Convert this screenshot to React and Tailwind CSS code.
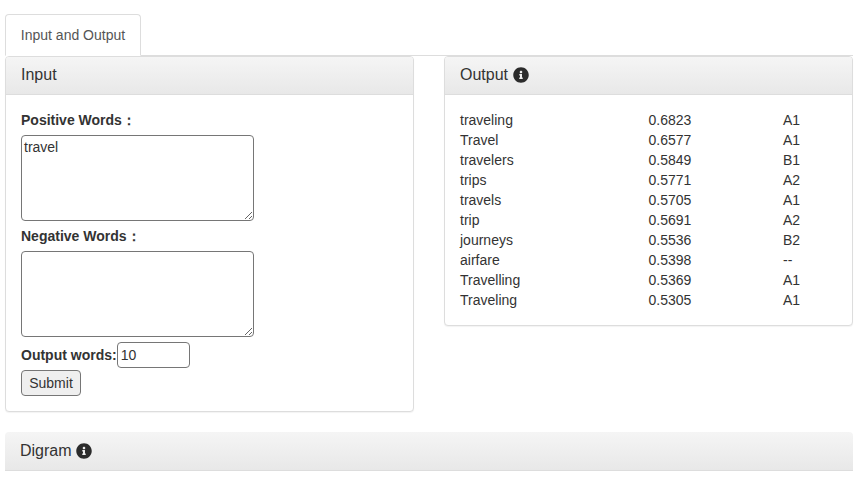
import { FaInfoCircle } from 'react-icons/fa';

const rows = [
  ['traveling', '0.6823', 'A1'],
  ['Travel', '0.6577', 'A1'],
  ['travelers', '0.5849', 'B1'],
  ['trips', '0.5771', 'A2'],
  ['travels', '0.5705', 'A1'],
  ['trip', '0.5691', 'A2'],
  ['journeys', '0.5536', 'B2'],
  ['airfare', '0.5398', '--'],
  ['Travelling', '0.5369', 'A1'],
  ['Traveling', '0.5305', 'A1'],
];

function PanelHeading({ title, info, className }) {
  return (
    <div className={`px-[15px] flex items-center border-b border-[#dddddd] bg-gradient-to-b from-[#f5f5f5] to-[#e8e8e8] text-base text-[#333333] ${className}`}>
      <span>{title}</span>
      {info && <FaInfoCircle className="w-4 h-4 text-[#2b2b2b]" />}
    </div>
  );
}

function App() {
  return (
    <div className="h-[480px] overflow-hidden bg-white pt-[14px] pl-[5px] pr-[10px] font-['Liberation_Sans',Arial,sans-serif] text-sm leading-5 text-[#333333]">
      {/* Tabs */}
      <div className="h-[42px] border-b border-[#dddddd]">
        <div className="w-[136px] h-[42px] flex items-center justify-center bg-white border border-[#dddddd] border-b-white rounded-t text-[#555555]">
          Input and Output
        </div>
      </div>

      <div className="flex items-start gap-[30px]">
        {/* Input */}
        <section className="w-[409px] h-[356px] bg-white border border-[#dddddd] rounded shadow-[0_1px_1px_rgba(0,0,0,0.05)] overflow-hidden">
          <PanelHeading title="Input" className="h-[38px] pb-[1px] gap-[5px]" />
          <div className="px-[15px] pt-[15px] flex flex-col items-start">
            <label className="font-bold mb-[5px]">Positive Words：</label>
            <textarea
              defaultValue="travel"
              className="block w-[233px] h-[86px] border border-[#767676] rounded-sm px-[2px] py-[2px] leading-[18px] outline-none resize"
            />
            <label className="font-bold mt-[5px] mb-[5px]">Negative Words：</label>
            <textarea className="block w-[233px] h-[86px] border border-[#767676] rounded-sm px-[2px] py-[2px] outline-none resize" />
            <div className="flex items-center mt-[5px]">
              <label className="font-bold">Output words:</label>
              <input
                type="text"
                defaultValue="10"
                className="w-[73px] h-[26px] border border-[#767676] rounded-sm px-[3px] outline-none"
              />
            </div>
            <button className="mt-[2px] w-[60px] h-[26px] border border-[#767676] rounded-sm bg-[#efefef] text-[#333333]">
              Submit
            </button>
          </div>
        </section>

        {/* Output */}
        <section className="w-[409px] h-[270px] bg-white border border-[#dddddd] rounded shadow-[0_1px_1px_rgba(0,0,0,0.05)] overflow-hidden">
          <PanelHeading title="Output" info className="h-[38px] pb-[1px] gap-[5px]" />
          <div className="px-[15px] pt-[15px]">
            {rows.map(([word, score, level]) => (
              <div key={word} className="grid grid-cols-[188.5px_134.5px_1fr] h-5">
                <span>{word}</span>
                <span>{score}</span>
                <span>{level}</span>
              </div>
            ))}
          </div>
        </section>
      </div>

      {/* Digram */}
      <section className="mt-[20px] w-[848px]">
        <PanelHeading title="Digram" info className="h-[39px] gap-[4px] rounded-t" />
      </section>
    </div>
  );
}

export default App;
